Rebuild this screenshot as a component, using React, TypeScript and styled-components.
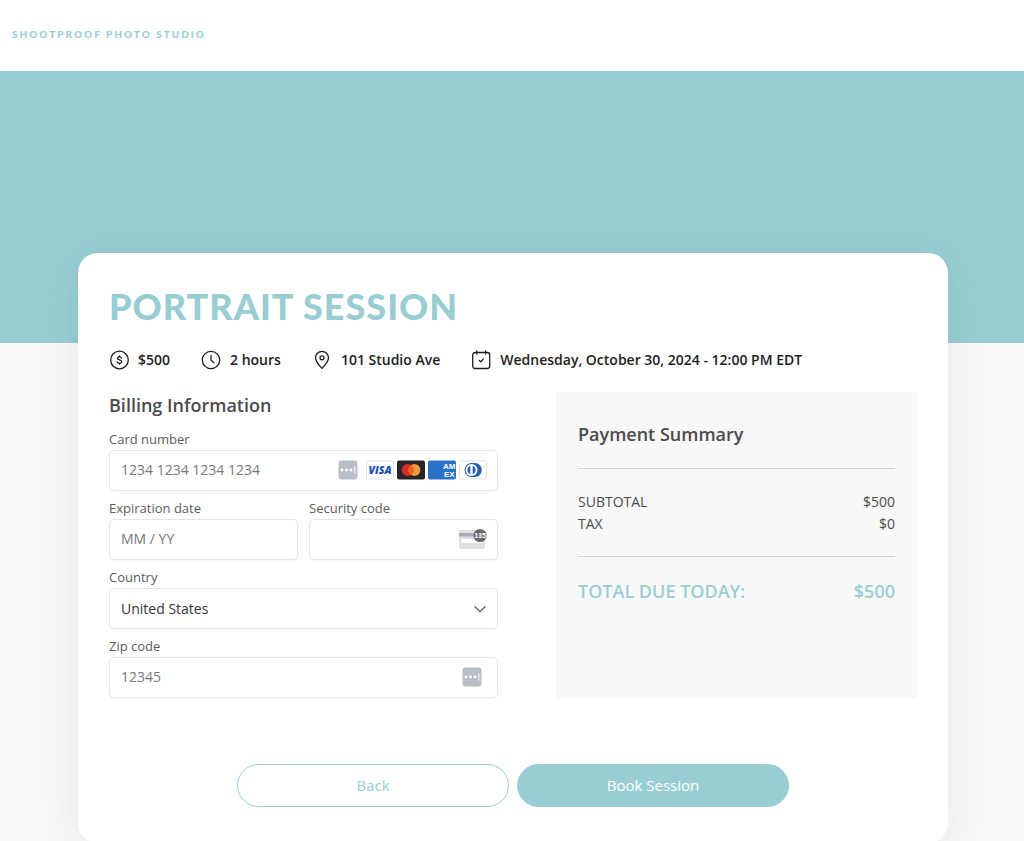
import React from 'react';
import styled, { createGlobalStyle } from 'styled-components';

const teal = '#98ced3';
const ink = '#1d1d1f';
const slate = '#4b4b4e';

const GlobalStyle = createGlobalStyle`
  *, *::before, *::after { box-sizing: border-box; }
  body {
    margin: 0;
    background: #f8f9f9;
    color: ${slate};
    font-family: "Open Sans", "Noto Sans", sans-serif;
    font-size: 14px;
  }
  h1, h2, p, ul, dl, dd { margin: 0; padding: 0; }
`;

const TopBar = styled.header`
  display: flex;
  align-items: center;
  height: 71px;
  padding: 0 12px 4px;
  background: #fff;
`;

const Brand = styled.a`
  color: ${teal};
  font: 900 10px/16px Lato, sans-serif;
  letter-spacing: 2px;
  text-decoration: none;
  text-transform: uppercase;
`;

const Hero = styled.div`
  height: 272px;
  background: ${teal};
`;

const Main = styled.main`
  padding: 0 76px 0 78px;
`;

const Card = styled.form`
  position: relative;
  margin-top: -90px;
  padding: 31px 31px 36px;
  border-radius: 20px;
  background: #fff;
  box-shadow: 0 4px 44px rgba(70, 80, 120, 0.1);
`;

const Title = styled.h1`
  color: ${teal};
  font: 900 36px/44px Lato, sans-serif;
  letter-spacing: 1px;
  text-transform: uppercase;
`;

const Facts = styled.ul`
  display: flex;
  flex-wrap: wrap;
  gap: 8px 31px;
  margin: 22px 0;
  list-style: none;
`;

const Fact = styled.li`
  display: flex;
  align-items: center;
  gap: 9px;
  color: ${ink};
  font-size: 14px;
  font-weight: 600;
  line-height: 20px;
`;

const Columns = styled.div`
  display: grid;
  grid-template-columns: minmax(0, 389fr) minmax(0, 361fr);
  gap: 58px;
`;

const Heading = styled.h2`
  font-size: 18px;
  font-weight: 600;
  line-height: 26px;
`;

const Fields = styled.div`
  display: grid;
  grid-template-columns: repeat(2, minmax(0, 1fr));
  gap: 9px 11px;
  margin-top: 13px;
`;

const Field = styled.div<{ $wide?: boolean }>`
  grid-column: ${(p) => (p.$wide ? '1 / -1' : 'auto')};
`;

const Label = styled.label`
  display: block;
  margin-bottom: 3px;
  color: #5c5c60;
  font-size: 13px;
  line-height: 16px;
`;

const Control = styled.div`
  display: flex;
  align-items: center;
  gap: 3px;
  height: 41px;
  padding: 0 10px 1px 0;
  border: 1px solid #e6e6e6;
  border-radius: 5px;
  background: #fff;
  box-shadow: 0 1px 3px rgba(0, 0, 0, 0.05);
`;

const Input = styled.input`
  flex: 1;
  min-width: 0;
  height: 100%;
  padding: 0 11px 1px;
  border: 0;
  outline: 0;
  background: none;
  color: #34343a;
  font: 400 14px "Open Sans", sans-serif;
  &::placeholder { color: #77777b; opacity: 1; }
`;

const SelectBox = styled.div`
  display: grid;
  align-items: center;
  height: 41px;
  border: 1px solid #e6e6e6;
  border-radius: 5px;
  box-shadow: 0 1px 3px rgba(0, 0, 0, 0.05);
  svg {
    grid-area: 1 / 1;
    justify-self: end;
    margin-right: 10px;
    pointer-events: none;
  }
`;

const Select = styled.select`
  grid-area: 1 / 1;
  width: 100%;
  height: 39px;
  padding: 0 11px;
  appearance: none;
  border: 0;
  outline: 0;
  background: none;
  color: #34343a;
  font: 400 14px "Open Sans", sans-serif;
`;

const KeyIcon = styled.svg`
  margin-right: 5px;
`;

const Summary = styled.section`
  padding: 29px 22px;
  background: #f8f8f8;
`;

const Rows = styled.dl`
  margin-top: 21px;
  padding: 22px 0 21px;
  border: solid #cfd4d6;
  border-width: 1px 0;
`;

const Row = styled.div`
  display: flex;
  justify-content: space-between;
  line-height: 22px;
`;

const Total = styled.div`
  display: flex;
  justify-content: space-between;
  margin-top: 20px;
  color: ${teal};
  font-size: 18px;
  font-weight: 600;
  line-height: 28px;
`;

const Actions = styled.div`
  display: flex;
  justify-content: center;
  gap: 8px;
  margin-top: 66px;
`;

const Button = styled.button<{ $filled?: boolean }>`
  flex: 0 1 272px;
  height: 43px;
  padding: 0 16px 2px;
  border: 1px solid ${teal};
  border-radius: 22px;
  background: ${(p) => (p.$filled ? teal : '#fff')};
  color: ${(p) => (p.$filled ? '#fff' : teal)};
  font: 400 15px "Open Sans", sans-serif;
`;

const line = { fill: 'none', stroke: ink, strokeWidth: 1.3, strokeLinecap: 'round', strokeLinejoin: 'round' } as const;

const DollarIcon = () => (
  <svg width="20" height="20" viewBox="0 0 20 20" {...line} aria-hidden="true">
    <circle cx="10.5" cy="10" r="8.8" />
    <path d="M12.500 8C12.300 7.200 11.600 6.800 10.500 6.800S8.500 7.300 8.500 8.300c0 2.300 4.200 1 4.200 3.400 0 1-.9 1.500-2.200 1.500s-2.100-.5-2.300-1.400M10.500 5.800v1M10.500 13.200v1" />
  </svg>
);

const ClockIcon = () => (
  <svg width="20" height="20" viewBox="0 0 20 20" {...line} aria-hidden="true">
    <circle cx="10" cy="10" r="8.700" />
    <path d="M10 5.400v4.800l3 2.600" />
  </svg>
);

const PinIcon = () => (
  <svg width="20" height="20" viewBox="0 0 20 20" {...line} aria-hidden="true">
    <path d="M10 18.400C6.700 15 3.500 11.400 3.500 7.800a6.500 6.500 0 0 1 13 0c0 3.600-3.200 7.200-6.500 10.600z" />
    <circle cx="10" cy="7.800" r="2" />
  </svg>
);

const CalendarIcon = () => (
  <svg width="20" height="20" viewBox="0 0 20 20" {...line} aria-hidden="true">
    <rect x="1.700" y="2.500" width="17" height="16" rx="2.500" />
    <path d="M5.800 1v3M14.600 1v3M8.200 10.400l1.600 1.400 2.400-2.500" />
  </svg>
);

const PasswordIcon = () => (
  <KeyIcon width="20" height="20" viewBox="0 0 20 20" aria-hidden="true">
    <rect x="0.500" y="0.500" width="19" height="19" rx="3" fill="#b9bfc6" />
    <g fill="#fff">
      <circle cx="4" cy="10" r="1.400" />
      <circle cx="8.500" cy="10" r="1.400" />
      <circle cx="13" cy="10" r="1.400" />
      <path d="M16.300 6.500h1v7h-1z" />
    </g>
  </KeyIcon>
);

const VisaIcon = () => (
  <svg width="28" height="20" viewBox="0 0 28 20" role="img" aria-label="Visa">
    <rect x="0.500" y="1" width="27" height="18" rx="1.500" fill="#fff" stroke="#e2e2e5" />
    <text x="14" y="13.800" textAnchor="middle" fill="#1d4cb8" fontFamily="Open Sans, sans-serif" fontSize="10.500" fontWeight="800" fontStyle="italic">VISA</text>
  </svg>
);

const MastercardIcon = () => (
  <svg width="28" height="20" viewBox="0 0 28 20" role="img" aria-label="Mastercard">
    <rect y="0.500" width="28" height="19" rx="2" fill="#252525" />
    <circle cx="10.700" cy="10" r="6" fill="#dc2b27" />
    <circle cx="17.400" cy="10" r="6" fill="#ee9a3a" />
    <path d="M14.050 5a6 6 0 0 1 0 10 6 6 0 0 1 0-10z" fill="#ec6222" />
  </svg>
);

const AmexIcon = () => (
  <svg width="28" height="20" viewBox="0 0 28 20" role="img" aria-label="American Express">
    <rect y="0.500" width="28" height="19" rx="2" fill="#2b70c9" />
    <g fill="#fff" fontFamily="Liberation Sans, sans-serif" fontSize="8" fontWeight="700">
      <text x="15" y="9">AM</text>
      <text x="16" y="17">EX</text>
    </g>
  </svg>
);

const DinersIcon = () => (
  <svg width="28" height="20" viewBox="0 0 28 20" role="img" aria-label="Diners Club">
    <rect x="0.500" y="1" width="27" height="18" rx="1.500" fill="#fff" stroke="#e2e2e5" />
    <path d="M12.500 3h3.300a7 7 0 0 1 0 14h-3.300z" fill="#2a5cb8" />
    <circle cx="12.500" cy="10" r="7" fill="#2a5cb8" />
    <circle cx="12.500" cy="10" r="6" fill="#fff" />
    <path d="M11.300 5.800a4.500 4.500 0 0 0 0 8.400zM13.700 5.800a4.500 4.500 0 0 1 0 8.400z" fill="#2a5cb8" />
  </svg>
);

const SecurityIcon = () => (
  <svg width="28" height="22" viewBox="0 0 28 22" aria-hidden="true">
    <rect y="2" width="26" height="19" rx="2" fill="#e0e0e1" />
    <path d="M0 5h26v3.500H0z" fill="#a9adb3" />
    <rect x="2.500" y="11" width="21" height="4" rx="1" fill="#fff" />
    <circle cx="21" cy="7.500" r="6.600" fill="#68696f" />
    <text x="21" y="10" textAnchor="middle" fill="#fff" fontFamily="Liberation Sans, sans-serif" fontSize="7" fontWeight="700">135</text>
  </svg>
);

const ChevronIcon = () => (
  <svg width="14" height="10" viewBox="0 0 14 10" fill="none" stroke="#6a6a6e" strokeWidth="1.400" strokeLinecap="round" strokeLinejoin="round" aria-hidden="true">
    <path d="M2 2.800l5 5 5-5" />
  </svg>
);

export default function App() {
  return (
    <>
      <GlobalStyle />
      <TopBar>
        <Brand href="#">ShootProof Photo Studio</Brand>
      </TopBar>
      <Hero />
      <Main>
        <Card onSubmit={(e) => e.preventDefault()}>
          <Title>Portrait Session</Title>
          <Facts>
            <Fact><DollarIcon />$500</Fact>
            <Fact><ClockIcon />2 hours</Fact>
            <Fact><PinIcon />101 Studio Ave</Fact>
            <Fact><CalendarIcon />Wednesday, October 30, 2024 - 12:00 PM EDT</Fact>
          </Facts>
          <Columns>
            <section>
              <Heading>Billing Information</Heading>
              <Fields>
                <Field $wide>
                  <Label htmlFor="card">Card number</Label>
                  <Control>
                    <Input id="card" placeholder="1234 1234 1234 1234" />
                    <PasswordIcon />
                    <VisaIcon />
                    <MastercardIcon />
                    <AmexIcon />
                    <DinersIcon />
                  </Control>
                </Field>
                <Field>
                  <Label htmlFor="expiry">Expiration date</Label>
                  <Control>
                    <Input id="expiry" placeholder="MM / YY" />
                  </Control>
                </Field>
                <Field>
                  <Label htmlFor="code">Security code</Label>
                  <Control>
                    <Input id="code" />
                    <SecurityIcon />
                  </Control>
                </Field>
                <Field $wide>
                  <Label htmlFor="country">Country</Label>
                  <SelectBox>
                    <Select id="country" defaultValue="US">
                      <option value="US">United States</option>
                    </Select>
                    <ChevronIcon />
                  </SelectBox>
                </Field>
                <Field $wide>
                  <Label htmlFor="zip">Zip code</Label>
                  <Control>
                    <Input id="zip" placeholder="12345" />
                    <PasswordIcon />
                  </Control>
                </Field>
              </Fields>
            </section>
            <Summary>
              <Heading>Payment Summary</Heading>
              <Rows>
                <Row><dt>SUBTOTAL</dt><dd>$500</dd></Row>
                <Row><dt>TAX</dt><dd>$0</dd></Row>
              </Rows>
              <Total><span>TOTAL DUE TODAY:</span><span>$500</span></Total>
            </Summary>
          </Columns>
          <Actions>
            <Button type="button">Back</Button>
            <Button type="submit" $filled>Book Session</Button>
          </Actions>
        </Card>
      </Main>
    </>
  );
}
